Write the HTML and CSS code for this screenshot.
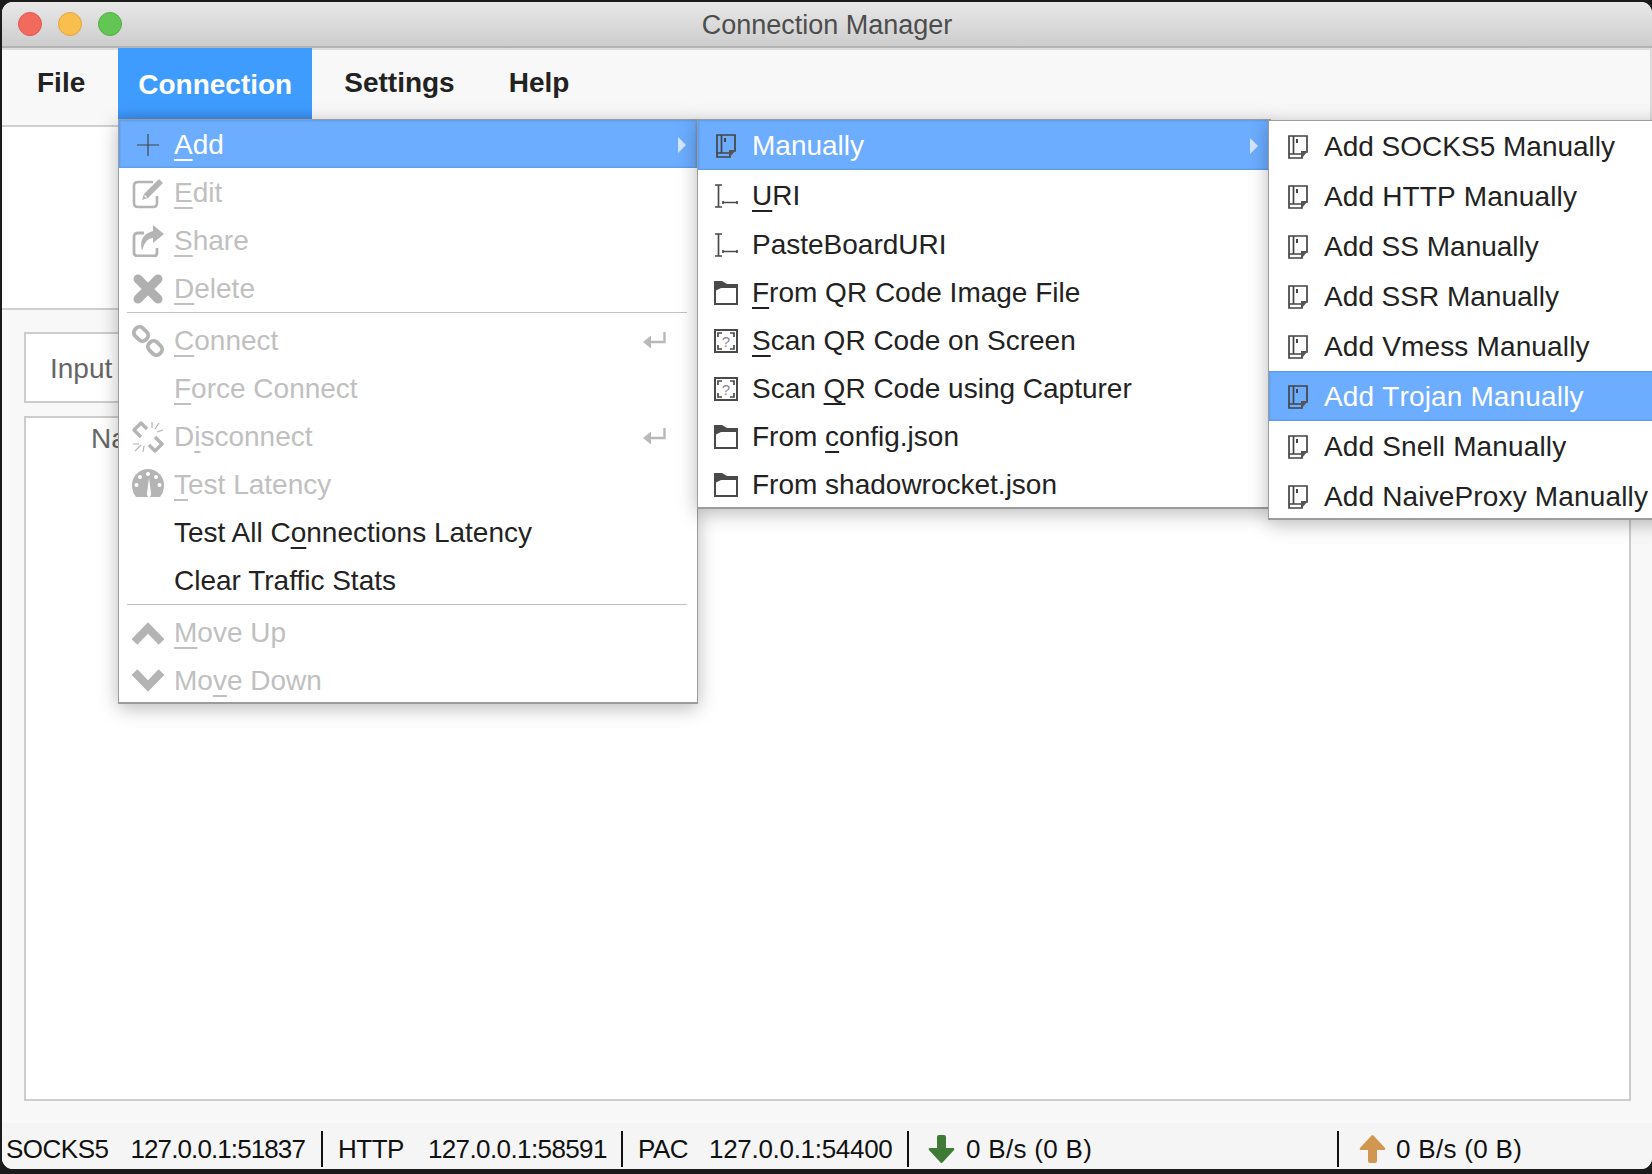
FILE: index.html
```html
<!DOCTYPE html>
<html lang="en">
<head>
<meta charset="utf-8">
<title>Connection Manager</title>
<link rel="stylesheet" href="styles.css">
</head>
<body>
<svg class="defs" width="0" height="0" aria-hidden="true">
  <symbol id="i-plus" viewBox="0 0 32 32"><path d="M16 5V27M5 16H27" stroke="#444" stroke-width="1.2" fill="none"/></symbol>
  <symbol id="i-edit" viewBox="0 0 32 32"><path d="M21 5H6Q2 5 2 9V26Q2 30 6 30H21Q25 30 25 26V19" stroke="#b4b4b4" stroke-width="2.6" fill="none"/><path d="M27 2L31 6L16 21L10 23L12 17Z" fill="#b4b4b4"/><path d="M12.5 18.5L14.5 20.5" stroke="#fff" stroke-width="1.2"/></symbol>
  <symbol id="i-share" viewBox="0 0 32 32"><path d="M12 8H6Q2 8 2 12V28Q2 31 6 31H22Q25 31 25 28V23" stroke="#b4b4b4" stroke-width="2.8" fill="none"/><path d="M21 0L32 9L21 18V13Q13 13 10 26Q6 10 21 6Z" fill="#b4b4b4"/></symbol>
  <symbol id="i-del" viewBox="0 0 32 32"><path d="M6 6L26 26M26 6L6 26" stroke="#b0b0b0" stroke-width="9" stroke-linecap="round" fill="none"/></symbol>
  <symbol id="i-link" viewBox="0 0 32 32"><g fill="none" stroke="#b4b4b4" stroke-width="3.8"><rect x="1.500" y="3.500" width="15" height="11" rx="5" transform="rotate(45 9 9)"/><rect x="15.500" y="17.500" width="15" height="11" rx="5" transform="rotate(45 23 23)"/></g></symbol>
  <symbol id="i-unlink" viewBox="0 0 32 32"><g fill="none" stroke="#b4b4b4" stroke-linejoin="round"><path d="M15 8L9 2L2 9L9 16" stroke-width="3.4"/><path d="M17 24L23 30L30 23L23 16" stroke-width="3.4"/><path d="M20 1V7M27 2L23 8M31 9L25 11M1 23H7M3 30L9 24M11 31L12 25" stroke-width="1.2"/></g></symbol>
  <symbol id="i-gauge" viewBox="0 0 32 32"><path d="M4 28Q0 23 0 16A16 16 0 0 1 32 16Q32 23 28 28Z" fill="#b4b4b4"/><g fill="#fff"><circle cx="16" cy="5" r="2"/><circle cx="8" cy="8" r="2"/><circle cx="24" cy="8" r="2"/><circle cx="4.500" cy="16" r="2"/><circle cx="27.500" cy="16" r="2"/><path d="M15 24L17 9L19 24Q19 28 17 28Q15 28 15 24Z"/></g></symbol>
  <symbol id="i-up" viewBox="0 0 32 32"><path d="M2.500 25L16 11L29.500 25" stroke="#b4b4b4" stroke-width="8" fill="none"/></symbol>
  <symbol id="i-down" viewBox="0 0 32 32"><path d="M2.500 7L16 21L29.500 7" stroke="#b4b4b4" stroke-width="8" fill="none"/></symbol>
  <symbol id="i-enter" viewBox="0 0 23 18"><path d="M21.500 0V10H3" stroke="#b8b8b8" stroke-width="2.4" fill="none"/><path d="M8 3.500V16.500L0 10Z" fill="#b8b8b8"/></symbol>
  <symbol id="i-note" viewBox="0 0 20 24"><g fill="none" stroke="#444" stroke-width="1.700"><path d="M1 1H19V17H14V23H1Z"/><path d="M5.500 1V19M1 19H14"/></g><path d="M13 16H20L13 24Z" fill="#555"/><rect x="8" y="4" width="2" height="4" fill="#444"/></symbol>
  <symbol id="i-uri" viewBox="0 0 24 24"><path d="M4.500 1V23M1 1H8M1 23H8M9 18.500H23M9 17V20M23 17V20" stroke="#4a4a4a" stroke-width="1.700" fill="none"/></symbol>
  <symbol id="i-folder" viewBox="0 0 24 24"><path d="M0 0H8L13 3H24V24H0Z" fill="#4a4a4a"/><path d="M2 9.500L7 7H22V22H2Z" fill="#fff"/></symbol>
  <symbol id="i-qr" viewBox="0 0 24 24"><rect x="1" y="1" width="22" height="22" fill="#fff" stroke="#4a4a4a" stroke-width="2"/><path d="M4 8V4H8M16 4H20V8M4 16V20H8M16 20H20V16" stroke="#4a4a4a" stroke-width="1.700" fill="none"/></symbol>
  <symbol id="i-dn" viewBox="0 0 27 28"><path d="M9 2Q9 0 11 0H16Q18 0 18 2V13H25Q27 13 26 15L14.500 27.500Q13.500 28.500 12.500 27.500L1 15Q0 13 2 13H9Z" fill="#3f7a37"/></symbol>
  <symbol id="i-upg" viewBox="0 0 27 28"><path d="M9 26Q9 28 11 28H16Q18 28 18 26V15H25Q27 15 26 13L14.500 .5Q13.500 -.5 12.500 .5L1 13Q0 15 2 15H9Z" fill="#d19750"/></symbol>
</svg>

<div class="window">
  <header class="titlebar">
    <div class="lights"><i class="light red"></i><i class="light yellow"></i><i class="light green"></i></div>
    <div class="title">Connection Manager</div>
  </header>

  <nav class="menubar">
    <div class="mb-item file">File</div>
    <div class="mb-item active">Connection</div>
    <div class="mb-item settings">Settings</div>
    <div class="mb-item help">Help</div>
  </nav>

  <div class="toolbar"></div>

  <main class="content">
    <div class="input-box"><span class="input-label">Input</span></div>
    <div class="table-box"><span class="col-name">Name</span></div>
  </main>

  <footer class="status">
    <div class="seg seg-socks"><span class="k">SOCKS5</span><span class="ip ip1">127.0.0.1:51837</span></div>
    <div class="seg seg-http"><span class="k">HTTP</span><span class="ip ip2">127.0.0.1:58591</span></div>
    <div class="seg seg-pac"><span class="k">PAC</span><span class="ip ip3">127.0.0.1:54400</span></div>
    <div class="seg seg-down"><svg class="arrow"><use href="#i-dn"/></svg><span class="rate">0 B/s (0 B)</span></div>
    <div class="seg seg-up"><svg class="arrow"><use href="#i-upg"/></svg><span class="rate">0 B/s (0 B)</span></div>
  </footer>

  <div class="menu main-menu">
    <div class="row on"><svg class="ic"><use href="#i-plus"/></svg><span><u>A</u>dd</span><i class="caret"></i></div>
    <div class="row dis"><svg class="ic"><use href="#i-edit"/></svg><span><u>E</u>dit</span></div>
    <div class="row dis"><svg class="ic"><use href="#i-share"/></svg><span><u>S</u>hare</span></div>
    <div class="row dis"><svg class="ic"><use href="#i-del"/></svg><span><u>D</u>elete</span></div>
    <div class="sep"></div>
    <div class="row dis"><svg class="ic"><use href="#i-link"/></svg><span><u>C</u>onnect</span><svg class="enter"><use href="#i-enter"/></svg></div>
    <div class="row dis"><i class="ic"></i><span><u>F</u>orce Connect</span></div>
    <div class="row dis"><svg class="ic"><use href="#i-unlink"/></svg><span>D<u>i</u>sconnect</span><svg class="enter"><use href="#i-enter"/></svg></div>
    <div class="row dis"><svg class="ic"><use href="#i-gauge"/></svg><span><u>T</u>est Latency</span></div>
    <div class="row"><i class="ic"></i><span>Test All C<u>o</u>nnections Latency</span></div>
    <div class="row"><i class="ic"></i><span>Clear Traffic Stats</span></div>
    <div class="sep"></div>
    <div class="row dis"><svg class="ic"><use href="#i-up"/></svg><span><u>M</u>ove Up</span></div>
    <div class="row dis"><svg class="ic"><use href="#i-down"/></svg><span>Mo<u>v</u>e Down</span></div>
  </div>

  <div class="menu sub-menu">
    <div class="row on h50"><svg class="ic"><use href="#i-note"/></svg><span>Manually</span><i class="caret"></i></div>
    <div class="row h49"><svg class="ic"><use href="#i-uri"/></svg><span><u>U</u>RI</span></div>
    <div class="row h49"><svg class="ic"><use href="#i-uri"/></svg><span>PasteBoardURI</span></div>
    <div class="row"><svg class="ic"><use href="#i-folder"/></svg><span><u>F</u>rom QR Code Image File</span></div>
    <div class="row"><svg class="ic" viewBox="0 0 24 24"><use href="#i-qr"/><text x="12" y="18" class="qr-mark">?</text></svg><span><u>S</u>can QR Code on Screen</span></div>
    <div class="row"><svg class="ic" viewBox="0 0 24 24"><use href="#i-qr"/><text x="12" y="18" class="qr-mark">?</text></svg><span>Scan <u>Q</u>R Code using Capturer</span></div>
    <div class="row"><svg class="ic"><use href="#i-folder"/></svg><span>From <u>c</u>onfig.json</span></div>
    <div class="row"><svg class="ic"><use href="#i-folder"/></svg><span>From shadowrocket.json</span></div>
  </div>

  <div class="menu add-menu">
    <div class="row h50"><svg class="ic"><use href="#i-note"/></svg><span>Add SOCKS5 Manually</span></div>
    <div class="row h50 wide"><svg class="ic"><use href="#i-note"/></svg><span>Add HTTP Manually</span></div>
    <div class="row h50"><svg class="ic"><use href="#i-note"/></svg><span>Add SS Manually</span></div>
    <div class="row h50"><svg class="ic"><use href="#i-note"/></svg><span>Add SSR Manually</span></div>
    <div class="row h50 wide"><svg class="ic"><use href="#i-note"/></svg><span>Add Vmess Manually</span></div>
    <div class="row h50 on wide"><svg class="ic"><use href="#i-note"/></svg><span>Add Trojan Manually</span></div>
    <div class="row h50 wide"><svg class="ic"><use href="#i-note"/></svg><span>Add Snell Manually</span></div>
    <div class="row h50 wide"><svg class="ic"><use href="#i-note"/></svg><span>Add NaiveProxy Manually</span></div>
  </div>
</div>
</body>
</html>
```
FILE: styles.css
```css
* { box-sizing: border-box; }
html, body { margin: 0; height: 100%; }
body {
  background: #1b1b1b;
  overflow: hidden;
  font-family: "Liberation Sans", Arial, sans-serif;
  font-size: 28px;
  color: #222;
}
.defs { position: absolute; }
.qr-mark { font-family: "Liberation Sans", sans-serif; font-size: 15px; fill: #888; text-anchor: middle; }

.window {
  position: relative;
  width: 1650px;
  height: 1167px;
  margin: 2px 0 0 2px;
  background: #f8f8f8;
  border-radius: 11px;
  overflow: hidden;
  display: flex;
  flex-direction: column;
}

.titlebar {
  flex: none;
  height: 46px;
  display: flex;
  align-items: center;
  justify-content: center;
  position: relative;
  background: linear-gradient(#e8e8e8, #cdcdcd);
  border-bottom: 2px solid #b4b4b4;
}
.lights { position: absolute; top: 10px; left: 16px; display: flex; gap: 16px; }
.light { display: block; width: 24px; height: 24px; border-radius: 50%; border: 1px solid; }
.red { background: #f26a5e; border-color: #e0554a; }
.yellow { background: #f8bf4f; border-color: #e3a53a; }
.green { background: #62c554; border-color: #52ad46; }
.title { font-size: 27px; color: #4d4d4d; margin-top: 3px; }

.menubar {
  flex: none;
  height: 79px;
  display: flex;
  align-items: flex-start;
  padding-left: 35px;
  background: #f8f8f8;
  border-top: 2px solid #dedede;
  border-bottom: 2px solid #cfcfcf;
  border-right: 2px solid #d8d8d8;
  font-weight: 700;
}
.mb-item { height: 71px; line-height: 65px; color: #222; white-space: nowrap; }
.file { margin-right: 33px; }
.active {
  padding: 0 20px;
  line-height: 73px;
  color: #fff;
  margin-top: -2px;
  height: 71px;
  background: linear-gradient(#3f9cff 85%, #3a8eee);
}
.settings { margin-left: 32px; }
.help { margin-left: 54px; }

.toolbar {
  flex: none;
  height: 183px;
  background: #fff;
  border-bottom: 2px solid #cfcfcf;
}

.content {
  flex: 1;
  display: flex;
  flex-direction: column;
  padding: 22px 21px 22px 22px;
  gap: 13px;
}
.input-box {
  flex: none;
  height: 71px;
  background: #fff;
  border: 2px solid #cdcdcd;
  padding-left: 24px;
  line-height: 69px;
  color: #666;
}
.table-box {
  flex: 1;
  background: #fff;
  border: 2px solid #cdcdcd;
  padding: 5px 0 0 65px;
  color: #666;
  line-height: 32px;
}

.status {
  flex: none;
  height: 46px;
  display: flex;
  align-items: center;
  background: #f5f5f5;
  font-size: 26px;
  color: #111;
  padding-top: 6px;
}
.seg { display: flex; align-items: center; height: 36px; white-space: nowrap; }
.seg + .seg { border-left: 2px solid #111; }
.seg-socks { width: 319px; padding-left: 4px; }
.seg-http { width: 300px; padding-left: 15px; }
.seg-pac { width: 286px; padding-left: 15px; }
.seg-down { width: 430px; padding-left: 19px; }
.seg-up { flex: 1; padding-left: 20px; }
.k { letter-spacing: -.5px; }
.seg-socks .k { margin-right: 22px; }
.seg-http .k { margin-right: 24px; }
.seg-pac .k { margin-right: 21px; }
.ip1 { letter-spacing: -.9px; }
.ip2 { letter-spacing: -.6px; }
.ip3 { letter-spacing: -.3px; }
.arrow { width: 27px; height: 28px; flex: none; }
.seg-down .arrow { margin-right: 11px; }
.seg-up .arrow { margin-right: 10px; }
.rate { letter-spacing: .3px; }

.menu {
  position: absolute;
  background: #fff;
  border: 1px solid #9c9c9c;
  border-bottom-width: 2px;
  box-shadow: 0 4px 18px rgba(0, 0, 0, .28);
}
.main-menu { left: 116px; top: 117px; width: 580px; height: 585px; }
.sub-menu { left: 695px; top: 117px; width: 574px; height: 390px; }
.add-menu { left: 1266px; top: 118px; width: 400px; height: 400px; font-kerning: none; }

.row {
  display: flex;
  align-items: center;
  height: 48px;
  padding-top: 2px;
  white-space: nowrap;
  color: #222;
}
.h49 { height: 49px; }
.h50 { height: 50px; }
.wide { letter-spacing: .15px; }
.ic { display: block; flex: none; }
.main-menu .row { padding-left: 13px; }
.main-menu .ic { width: 32px; height: 32px; margin-right: 10px; }
.sub-menu .row { padding-left: 16px; }
.sub-menu .ic { width: 24px; height: 24px; margin-right: 14px; }
.add-menu .row { padding-left: 19px; }
.add-menu .ic { width: 20px; height: 24px; margin-right: 16px; }

.row u {
  text-decoration: underline;
  text-decoration-thickness: 2px;
  text-underline-offset: 5px;
  text-decoration-skip-ink: none;
}
.row.dis { color: #c0c0c0; }
.row.on {
  background: #6cadff;
  color: #fff;
  box-shadow: inset 0 0 0 1.5px #5e9fef;
}
.caret {
  margin-left: auto;
  margin-right: 11px;
  width: 0;
  height: 0;
  border-left: 8px solid #d4e6ff;
  border-top: 8px solid transparent;
  border-bottom: 8px solid transparent;
}
.sub-menu .caret { margin-right: 12px; }
.enter { width: 23px; height: 18px; margin-left: auto; margin-right: 31px; }
.sep { height: 4px; }
.sep::before {
  content: "";
  display: block;
  margin: 0 10px 0 8px;
  height: 1px;
  background: #c2c2c2;
}
```
